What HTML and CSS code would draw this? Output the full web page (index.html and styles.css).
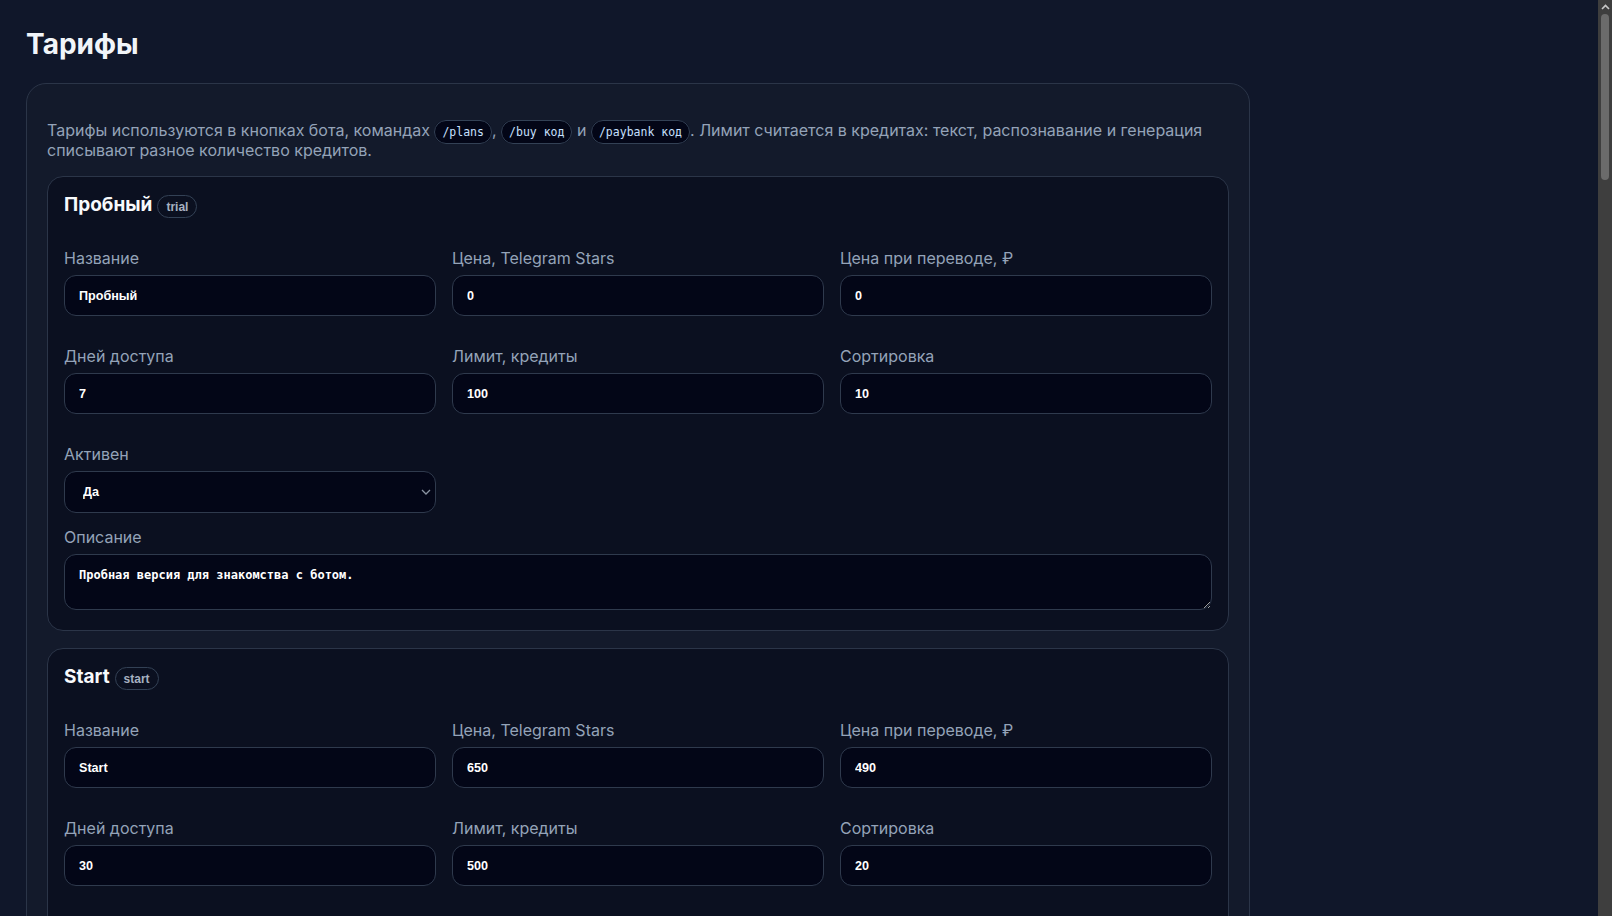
FILE: index.html
```html
<!DOCTYPE html>
<html lang="ru">
<head>
<meta charset="utf-8">
<title>Тарифы</title>
<link rel="stylesheet" href="styles.css">
</head>
<body>
<main class="page">
  <h1 class="page-title">Тарифы</h1>
  <section class="panel">
    <p class="intro">Тарифы используются в кнопках бота, командах <code class="cmd">/plans</code>, <code class="cmd">/buy код</code> и <code class="cmd">/paybank код</code>. Лимит считается в кредитах: текст, распознавание и генерация списывают разное количество кредитов.</p>

    <div class="plan">
      <div class="plan-head">
        <h2 class="plan-name">Пробный</h2>
        <span class="plan-code">trial</span>
      </div>
      <div class="grid">
        <div class="field"><label class="label">Название</label><input class="control" value="Пробный"></div>
        <div class="field"><label class="label">Цена, Telegram Stars</label><input class="control" value="0"></div>
        <div class="field"><label class="label">Цена при переводе, ₽</label><input class="control" value="0"></div>
        <div class="field"><label class="label">Дней доступа</label><input class="control" value="7"></div>
        <div class="field"><label class="label">Лимит, кредиты</label><input class="control" value="100"></div>
        <div class="field"><label class="label">Сортировка</label><input class="control" value="10"></div>
        <div class="field"><label class="label">Активен</label>
          <div class="select-wrap">
            <select class="control select"><option>Да</option><option>Нет</option></select>
            <svg class="chev" width="10" height="6" viewBox="0 0 10 6"><path d="M1 1l4 4 4-4" fill="none" stroke="#8b94a3" stroke-width="1.3"/></svg>
          </div>
        </div>
      </div>
      <div class="field field-last"><label class="label">Описание</label><textarea class="control area">Пробная версия для знакомства с ботом.</textarea></div>
    </div>

    <div class="plan">
      <div class="plan-head">
        <h2 class="plan-name">Start</h2>
        <span class="plan-code">start</span>
      </div>
      <div class="grid">
        <div class="field"><label class="label">Название</label><input class="control" value="Start"></div>
        <div class="field"><label class="label">Цена, Telegram Stars</label><input class="control" value="650"></div>
        <div class="field"><label class="label">Цена при переводе, ₽</label><input class="control" value="490"></div>
        <div class="field"><label class="label">Дней доступа</label><input class="control" value="30"></div>
        <div class="field"><label class="label">Лимит, кредиты</label><input class="control" value="500"></div>
        <div class="field"><label class="label">Сортировка</label><input class="control" value="20"></div>
        <div class="field"><label class="label">Активен</label>
          <div class="select-wrap">
            <select class="control select"><option>Да</option><option>Нет</option></select>
            <svg class="chev" width="10" height="6" viewBox="0 0 10 6"><path d="M1 1l4 4 4-4" fill="none" stroke="#8b94a3" stroke-width="1.3"/></svg>
          </div>
        </div>
      </div>
      <div class="field field-last"><label class="label">Описание</label><textarea class="control area">Базовый тариф для ежедневной работы.</textarea></div>
    </div>
  </section>
</main>
<div class="scrollbar" aria-hidden="true">
  <svg class="scroll-up" width="9" height="6" viewBox="0 0 9 6"><path d="M1 5l3.5-3.5L8 5" fill="none" stroke="#c8c8c8" stroke-width="1.6"/></svg>
  <div class="scroll-thumb"></div>
</div>
</body>
</html>
```
FILE: styles.css
```css
html, body {
  margin: 0;
  padding: 0;
  background: #10172a;
}
body {
  font-family: Inter, "Noto Sans", sans-serif;
  color: #e5e7eb;
}
.page {
  padding: 27px 26px 40px;
}
.page-title {
  margin: 0 0 22px;
  font-size: 28px;
  line-height: 34px;
  font-weight: 700;
  color: #f1f5f9;
}
.panel {
  width: 1224px;
  box-sizing: border-box;
  background: #131a2b;
  border: 1px solid #2b3548;
  border-radius: 20px;
  padding: 36px 20px 20px;
}
.intro {
  margin: 0 0 16px;
  font-size: 16px;
  line-height: 20px;
  color: #94a3b8;
}
.cmd {
  font-family: "DejaVu Sans Mono", "Liberation Mono", monospace;
  font-size: 11.5px;
  line-height: 1;
  color: #c7e0ff;
  background: #030617;
  border: 1px solid #334155;
  border-radius: 999px;
  padding: 4px 7px;
}
.plan {
  background: #0b1020;
  border: 1px solid #2b3548;
  border-radius: 16px;
  padding: 16px 16px 16px;
  margin-bottom: 17px;
}
.plan-head {
  display: flex;
  align-items: center;
  gap: 5px;
  height: 24px;
  margin-bottom: 31px;
}
.plan-name {
  margin: 0;
  font-size: 19px;
  line-height: 24px;
  font-weight: 700;
  color: #f8fafc;
}
.plan-code {
  display: inline-flex;
  align-items: center;
  height: 23px;
  box-sizing: border-box;
  padding: 1px 8px 0;
  border: 1px solid #334155;
  border-radius: 999px;
  font-family: "Liberation Sans", Arial, sans-serif;
  font-size: 12px;
  font-weight: 700;
  color: #a7b1c0;
  margin-top: 2px;
}
.grid {
  display: grid;
  grid-template-columns: repeat(3, 1fr);
  column-gap: 16px;
  row-gap: 16px;
}
.field {
  display: flex;
  flex-direction: column;
  margin-bottom: 14px;
}
.field-last {
  margin-bottom: 4px;
}
.label {
  font-size: 16px;
  line-height: 20px;
  color: #94a3b8;
  margin-bottom: 7px;
}
.control {
  box-sizing: border-box;
  height: 41px;
  width: 100%;
  background: #030617;
  border: 1px solid #2f3a4d;
  border-radius: 12px;
  padding: 0 14px;
  font-family: "Liberation Sans", Arial, sans-serif;
  font-size: 12.6px;
  font-weight: 700;
  color: #ffffff;
  outline: none;
}
.select-wrap {
  position: relative;
}
.select {
  -webkit-appearance: none;
  appearance: none;
  height: 42px;
  padding-left: 18px;
}
.chev {
  position: absolute;
  right: 5px;
  top: 18px;
  pointer-events: none;
}
.area {
  display: block;
  height: 56px;
  padding: 12px 14px;
  resize: vertical;
  font-family: "DejaVu Sans Mono", "Liberation Mono", monospace;
  font-size: 12px;
  line-height: 16px;
  font-weight: 700;
}
.scrollbar {
  position: fixed;
  top: 0;
  right: 0;
  width: 14px;
  height: 100%;
  background: #3e3e3e;
}
.scroll-up {
  position: absolute;
  top: 4px;
  left: 3px;
}
.scroll-thumb {
  position: absolute;
  top: 14px;
  left: 3px;
  width: 8px;
  height: 166px;
  border-radius: 4px;
  background: #6b6b6b;
}
```
